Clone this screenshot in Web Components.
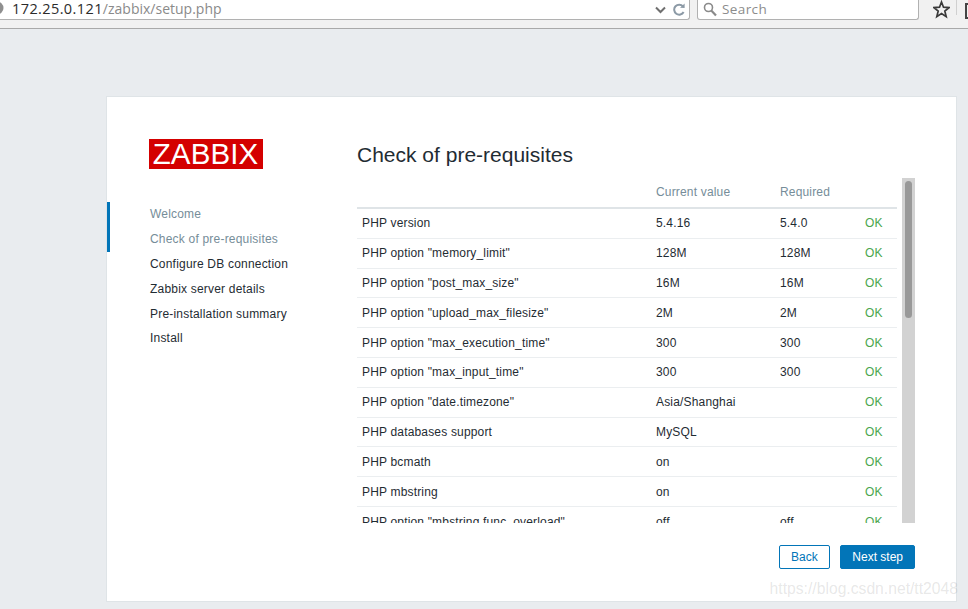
<!DOCTYPE html>
<html>
<head>
<meta charset="utf-8">
<title>Zabbix setup</title>
<style>
html, body { margin: 0; padding: 0; height: 100%; overflow: hidden; background: #e9ecef; font-family: "Liberation Sans", Arial, sans-serif; }
</style>
</head>
<body>
<browser-bar></browser-bar>
<setup-card>
    <setup-steps slot="side"></setup-steps>
    <h-title slot="title">Check of pre-requisites</h-title>
    <check-table slot="body"></check-table>
    <setup-button slot="actions" kind="ghost">Back</setup-button>
    <setup-button slot="actions">Next step</setup-button>
</setup-card>

<script>
//browser toolbar that was caught in the screenshot
class BrowserBar extends HTMLElement {
    constructor() {
        super();
        let shadowRoot = this.attachShadow({mode: 'open'});
        shadowRoot.innerHTML = `
            <style>
                :host {
                    display: flex;
                    height: 29px;
                    box-sizing: border-box;
                    background: #f1f1f1;
                    border-bottom: 1px solid #a9a9a9;
                    overflow: hidden;
                    font-family: "Open Sans", sans-serif;
                    font-size: 14.5px;
                }
                :host > *, .url, .search, .star, .sep, .more { flex-shrink: 0; }
                .url, .search {
                    box-sizing: border-box;
                    height: 20px;
                    background: #fff;
                    border: 1px solid #b1b1b1;
                    border-top: 0;
                    border-radius: 0 0 3px 3px;
                    display: flex;
                    align-items: center;
                }
                .url {
                    width: 700px;
                    margin-left: -10px;
                    padding-left: 21px;
                    position: relative;
                }
                .globe { position: absolute; left: 4px; top: 1px; }
                .host { color: #2b2b2b; letter-spacing: .4px; position: relative; top: -1px; }
                .path { color: #8a8a8a; font-size: 14px; position: relative; top: -1px; }
                .tools { margin-left: auto; display: flex; align-items: center; gap: 7px; padding-right: 4px; }
                .search { width: 222px; margin-left: 7px; padding-left: 5px; color: #8c8c8c; gap: 5px; font-size: 13.5px; letter-spacing: .4px; }
                .search span { position: relative; top: -1px; }
                .star { margin-left: 14px; height: 19px; }
                .sep { width: 1px; height: 15px; background: #d0d0d0; margin: 0 0 0 6px; }
                .more { width: 3px; height: 12px; margin: 3px 0 0 8px; border: 2px solid #444; border-right: 0; box-sizing: content-box; }
            </style>
            <div class="url">
                <svg class="globe" width="9" height="14" viewBox="0 0 9 14"><circle cx="2" cy="7" r="6.5" fill="#8f8f8f"/><path d="M0 3.5 3 5 5 8 3 10 1 9" fill="#c9c9c9"/></svg>
                <span class="host">172.25.0.121</span><span class="path">/zabbix/setup.php</span>
                <div class="tools">
                    <svg width="11" height="8" viewBox="0 0 11 8"><path d="M1 1.5 5.5 6 10 1.5" fill="none" stroke="#6f6f6f" stroke-width="2"/></svg>
                    <svg width="12" height="13" viewBox="0 0 12 13"><path d="M10 3.4A5 5 0 1 0 10.6 9" fill="none" stroke="#8c9aa6" stroke-width="2"/><path d="M7 4.8 11.6 5 11.6 .6z" fill="#8c9aa6"/></svg>
                </div>
            </div>
            <div class="search">
                <svg width="14" height="15" viewBox="0 0 14 15"><circle cx="5.5" cy="5.5" r="4" fill="none" stroke="#8a8a8a" stroke-width="1.6"/><path d="M8.5 8.8 13 13.5" stroke="#8a8a8a" stroke-width="2.2"/></svg>
                <span>Search</span>
            </div>
            <svg class="star" width="17" height="19" viewBox="0 0 17 19"><path d="M8.5 2 10.5 7.2 16 7.6 11.8 11 13.2 16.6 8.5 13.6 3.8 16.6 5.2 11 1 7.6 6.5 7.2z" fill="none" stroke="#3a3a3a" stroke-width="1.7"/></svg>
            <div class="sep"></div>
            <div class="more"></div>
        `;
    }
}

//white card with sidebar, heading, scrolling body and buttons
class SetupCard extends HTMLElement {
    constructor() {
        super();
        let shadowRoot = this.attachShadow({mode: 'open'});
        shadowRoot.innerHTML = `
            <style>
                :host {
                    display: grid;
                    grid-template-columns: 250px 558px;
                    box-sizing: border-box;
                    width: 851px;
                    height: 506px;
                    margin: 67px 0 0 106px;
                    background: #fff;
                    border: 1px solid #dfe4e7;
                    position: relative;
                }
                .main { padding-top: 44px; display: flex; flex-direction: column; }
                .actions { display: flex; justify-content: flex-end; gap: 10px; margin-top: 22px; }
                .mark {
                    position: absolute;
                    right: -2px;
                    bottom: 3px;
                    font-size: 15.7px;
                    color: rgba(120,120,120,.18);
                    white-space: nowrap;
                }
            </style>
            <slot name="side"></slot>
            <div class="main">
                <slot name="title"></slot>
                <slot name="body"></slot>
                <div class="actions"><slot name="actions"></slot></div>
            </div>
            <span class="mark">https://blog.csdn.net/tt2048</span>
        `;
    }
}

//logo and the list of steps, the bar on the left marks the current ones
class SetupSteps extends HTMLElement {
    constructor() {
        super();
        let shadowRoot = this.attachShadow({mode: 'open'});
        let steps = ['Welcome', 'Check of pre-requisites', 'Configure DB connection', 'Zabbix server details', 'Pre-installation summary', 'Install'];
        shadowRoot.innerHTML = `
            <style>
                :host { display: block; padding-top: 42px; font-size: 12px; color: #1f2c33; letter-spacing: .2px; }
                .logo {
                    display: block;
                    width: 114px;
                    height: 30px;
                    margin-left: 42px;
                    background: #d40000;
                    color: #fff;
                    font-size: 29.5px;
                    line-height: 30px;
                    text-align: center;
                    letter-spacing: .1px;
                    text-indent: -1px;
                }
                ol { list-style: none; margin: 33.15px 0 0; padding: 0 0 0 40px; border-left: 3px solid transparent; position: relative; }
                ol::before { content: ""; position: absolute; left: -3px; top: 0; width: 3px; height: 50px; background: #0275b8; }
                li { height: 24.85px; line-height: 24px; }
                li.done { color: #768d99; }
            </style>
            <span class="logo">ZABBIX</span>
            <ol>${steps.map((s, i) => `<li class="${i < 2 ? 'done' : ''}">${s}</li>`).join('')}</ol>
        `;
    }
}

class HTitle extends HTMLElement {
    constructor() {
        super();
        let shadowRoot = this.attachShadow({mode: 'open'});
        shadowRoot.innerHTML = `
            <style>
                :host { display: block; height: 37px; font-size: 21px; line-height: 28px; color: #1f2c33; }
            </style>
            <slot></slot>
        `;
    }
}

//table of checks, cut off at the bottom like a scrolled box
class CheckTable extends HTMLElement {
    constructor() {
        super();
        let shadowRoot = this.attachShadow({mode: 'open'});
        let rows = [
            ['PHP version', '5.4.16', '5.4.0'],
            ['PHP option "memory_limit"', '128M', '128M'],
            ['PHP option "post_max_size"', '16M', '16M'],
            ['PHP option "upload_max_filesize"', '2M', '2M'],
            ['PHP option "max_execution_time"', '300', '300'],
            ['PHP option "max_input_time"', '300', '300'],
            ['PHP option "date.timezone"', 'Asia/Shanghai', ''],
            ['PHP databases support', 'MySQL', ''],
            ['PHP bcmath', 'on', ''],
            ['PHP mbstring', 'on', ''],
            ['PHP option "mbstring.func_overload"', 'off', 'off'],
            ['PHP option "always_populate_raw_post_data"', 'off', 'off']
        ];
        shadowRoot.innerHTML = `
            <style>
                :host { display: flex; height: 345px; justify-content: space-between; font-size: 12px; line-height: 14px; letter-spacing: .17px; color: #1f2c33; }
                .rows { width: 540px; overflow: hidden; }
                .row {
                    display: grid;
                    grid-template-columns: 294px 124px 85px 1fr;
                    box-sizing: border-box;
                    height: 29.83px;
                    padding-left: 5px;
                    align-items: center;
                    border-bottom: 1px solid #ebeef0;
                }
                .head { color: #768d99; height: 30.86px; border-bottom: 2px solid #dfe4e7; }
                .ok { color: #4aa64e; }
                .track { width: 13px; background: #d2d2d2; box-sizing: border-box; padding: 3px; }
                .thumb { width: 7px; height: 137px; background: #999; border-radius: 4px; }
            </style>
            <div class="rows">
                <div class="row head"><span></span><span>Current value</span><span>Required</span><span></span></div>
                ${rows.map(r => `<div class="row"><span>${r[0]}</span><span>${r[1]}</span><span>${r[2]}</span><span class="ok">OK</span></div>`).join('')}
            </div>
            <div class="track"><div class="thumb"></div></div>
        `;
    }
}

/*
button of the setup wizard
attributes:
    kind: 'ghost' for the outlined one
*/
class SetupButton extends HTMLElement {
    constructor() {
        super();
        let shadowRoot = this.attachShadow({mode: 'open'});
        shadowRoot.innerHTML = `
            <style>
                :host {
                    display: flex;
                    align-items: center;
                    justify-content: center;
                    box-sizing: border-box;
                    height: 24px;
                    padding: 0 11px;
                    background: #0275b8;
                    border: 1px solid #0275b8;
                    border-radius: 2px;
                    color: #fff;
                    font-size: 12px;
                }
                :host([kind="ghost"]) { background: #fff; color: #0275b8; padding: 0 11.5px; }
            </style>
            <slot></slot>
        `;
    }
}

window.customElements.define('browser-bar', BrowserBar);
window.customElements.define('setup-card', SetupCard);
window.customElements.define('setup-steps', SetupSteps);
window.customElements.define('h-title', HTitle);
window.customElements.define('check-table', CheckTable);
window.customElements.define('setup-button', SetupButton);
</script>
</body>
</html>
